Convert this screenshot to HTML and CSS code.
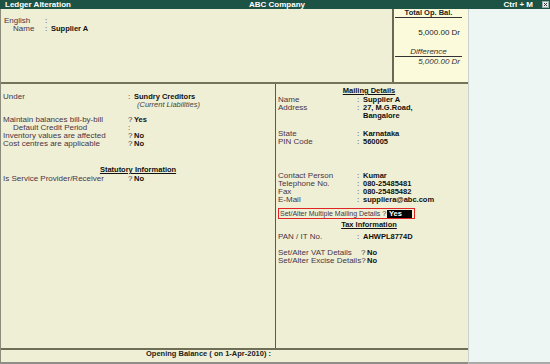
FILE: index.html
```html
<!DOCTYPE html>
<html>
<head>
<meta charset="utf-8">
<link rel="stylesheet" href="styles.css">
</head>
<body>
<div class="titlebar">
  <span class="t-left">Ledger Alteration</span>
  <span class="t-center">ABC Company</span>
  <span class="t-right">Ctrl + M
    <svg class="closebox" width="7" height="7" viewBox="0 0 7 7"><rect x="0.5" y="0.5" width="6" height="6" fill="#e8ece8" stroke="#9aa" stroke-width="1"/><path d="M2 2 L5 5 M5 2 L2 5" stroke="#333" stroke-width="1"/></svg>
  </span>
</div>
<div class="main">
  <div class="screen">
    <div class="top">
      <div class="top-left">
        <div class="row"><span class="tl-label">English</span><span class="mk">:</span></div>
        <div class="row"><span class="tl-label ind">Name</span><span class="mk">:</span><b class="val">Supplier A</b></div>
      </div>
      <div class="totals">
        <div class="tot-title">Total Op. Bal.</div>
        <div class="tot-amt">5,000.00 Dr</div>
        <div class="tot-diff">Difference</div>
        <div class="tot-amt2">5,000.00 Dr</div>
      </div>
    </div>
    <div class="middle">
      <div class="col-left">
        <div class="row"><span class="l-label">Under</span><span class="mk">:</span><b class="val">Sundry Creditors</b></div>
        <div class="row"><span class="l-label"></span><i class="sub">(Current Liabilities)</i></div>
        <div class="row gap7"><span class="l-label">Maintain balances bill-by-bill</span><span class="mk">?</span><b class="val">Yes</b></div>
        <div class="row"><span class="l-label ind">Default Credit Period</span><span class="mk">:</span></div>
        <div class="row"><span class="l-label">Inventory values are affected</span><span class="mk">?</span><b class="val">No</b></div>
        <div class="row"><span class="l-label">Cost centres are applicable</span><span class="mk">?</span><b class="val">No</b></div>
        <div class="heading stat">Statutory Information</div>
        <div class="row"><span class="l-label">Is Service Provider/Receiver</span><span class="mk">?</span><b class="val">No</b></div>
      </div>
      <div class="col-right">
        <div class="heading mail">Mailing Details</div>
        <div class="row"><span class="r-label">Name</span><span class="mk">:</span><b class="val">Supplier A</b></div>
        <div class="row"><span class="r-label">Address</span><span class="mk">:</span><b class="val">27, M.G.Road,</b></div>
        <div class="row"><span class="r-label"></span><span class="mk"></span><b class="val">Bangalore</b></div>
        <div class="row gap10"><span class="r-label">State</span><span class="mk">:</span><b class="val">Karnataka</b></div>
        <div class="row"><span class="r-label">PIN Code</span><span class="mk">:</span><b class="val">560005</b></div>
        <div class="row gap26"><span class="r-label">Contact Person</span><span class="mk">:</span><b class="val">Kumar</b></div>
        <div class="row"><span class="r-label">Telephone No.</span><span class="mk">:</span><b class="val">080-25485481</b></div>
        <div class="row"><span class="r-label">Fax</span><span class="mk">:</span><b class="val">080-25485482</b></div>
        <div class="row"><span class="r-label">E-Mail</span><span class="mk">:</span><b class="val">suppliera@abc.com</b></div>
        <div class="multi"><span class="multi-label">Set/Alter Multiple Mailing Details ?</span><b class="multi-val">Yes</b></div>
        <div class="heading tax">Tax Information</div>
        <div class="row gap3"><span class="r-label">PAN / IT No.</span><span class="mk">:</span><b class="val">AHWPL8774D</b></div>
        <div class="row gap8"><span class="q-label">Set/Alter VAT Details</span><span class="mk">?</span><b class="val">No</b></div>
        <div class="row"><span class="q-label">Set/Alter Excise Details?</span><span class="mk"></span><b class="val">No</b></div>
      </div>
    </div>
    <div class="footer">Opening Balance ( on 1-Apr-2010) :</div>
  </div>
  <div class="side"></div>
</div>
</body>
</html>
```
FILE: styles.css
```css
* { box-sizing: border-box; }
html, body { margin: 0; padding: 0; }
body {
  width: 550px;
  height: 364px;
  overflow: hidden;
  font-family: "Liberation Sans", Arial, sans-serif;
  font-size: 8px;
  line-height: 8px;
  color: #4a3446;
  background: #eef6f4;
}
b { font-weight: bold; color: #111; font-size: 7.5px; }
.titlebar {
  height: 9px;
  background: #1d5345;
  color: #fff;
  font-weight: bold;
  display: grid;
  grid-template-columns: 1fr auto 1fr;
  align-items: center;
  padding: 0 1px 0 5px;
  line-height: 9px;
}
.t-right { justify-self: end; display: flex; align-items: center; gap: 9px; }
.closebox { display: block; }
.main { display: flex; height: 355px; }
.screen {
  width: 468px;
  background: #eeefd5;
  display: flex;
  flex-direction: column;
  border-left: 1px solid #8c8c7c;
  border-bottom: 2px solid #8e8e86;
}
.side {
  flex: 1;
  background: #eef6f4;
  border-left: 1px solid #c9d2cf;
  border-bottom: 2px solid #a9aaa8;
}
.top {
  height: 75px;
  display: flex;
  border-bottom: 2px solid #74745a;
}
.top-left { flex: 1; padding-top: 8px; }
.row { display: flex; height: 8px; white-space: nowrap; }
.tl-label { width: 44px; padding-left: 3px; }
.ind { padding-left: 12px; }
.mk { width: 6px; color: #4a3446; }
.val { padding-left: 0; }
.totals {
  width: 76px;
  background: #fbfbdc;
  border-left: 2px solid #6a6a54;
}
.tot-title {
  margin: 0 6px 0 1px;
  height: 9px;
  text-align: center;
  font-weight: bold;
  font-size: 7.5px;
  color: #222;
  border-bottom: 1px solid #333;
}
.tot-amt {
  margin-top: 11px;
  padding-right: 8px;
  text-align: right;
  color: #222;
}
.tot-diff {
  margin: 11px 6px 0 1px;
  height: 9px;
  text-align: center;
  font-style: italic;
  color: #333;
  border-bottom: 1px solid #333;
}
.tot-amt2 {
  margin-top: 1px;
  padding-right: 8px;
  text-align: right;
  font-style: italic;
  color: #333;
}
.middle { flex: 1; display: flex; }
.col-left {
  width: 275px;
  border-right: 1px solid #5a5a48;
  padding-top: 9px;
}
.l-label { width: 127px; padding-left: 2px; }
.l-label.ind { padding-left: 12px; }
.sub { font-size: 7.5px; color: #444; padding-left: 9px; }
.gap7 { margin-top: 7px; }
.heading {
  font-weight: bold;
  font-size: 7.5px;
  color: #111;
  text-align: center;
  text-decoration: underline;
  height: 9px;
  line-height: 8px;
}
.stat { margin-top: 18px; }
.col-right { flex: 1; padding-top: 3px; padding-left: 2px; }
.r-label { width: 79px; }
.q-label { width: 83px; }
.mail { padding-right: 8px; height: 9px; }
.gap10 { margin-top: 10px; }
.gap26 { margin-top: 26px; }
.gap3 { margin-top: 3px; }
.gap8 { margin-top: 8px; }
.multi {
  margin-top: 4px;
  width: 137px;
  height: 11px;
  border: 1px solid #e02424;
  display: flex;
  align-items: center;
  white-space: nowrap;
}
.multi-label { padding-left: 1px; font-size: 7px; }
.multi-val {
  margin-left: auto;
  margin-right: 2px;
  background: #000;
  color: #fff;
  width: 25px;
  height: 8px;
  line-height: 8px;
  padding-left: 2px;
}
.tax { margin-top: 2px; padding-right: 8px; }
.footer {
  height: 14px;
  border-top: 2px solid #6f6f58;
  padding-left: 145px;
  font-weight: bold;
  font-size: 7.5px;
  color: #222;
  line-height: 8px;
}
```
